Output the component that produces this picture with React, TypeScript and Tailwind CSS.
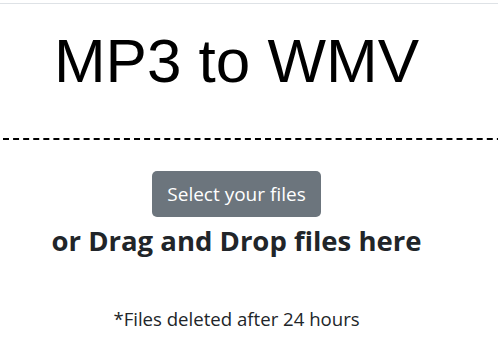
import React from "react";

export default function App() {
  return (
    <div className="w-[498px] h-[355px] bg-white overflow-hidden">
      <div className="h-[3px]" />
      <div className="h-px bg-[#dee2e6]" />
      <div className="w-[473px] mt-[26px] text-center font-['Liberation_Sans',Arial,sans-serif] text-[62px] leading-[62px] text-black whitespace-nowrap">
        MP3 to WMV
      </div>
      <div className="mt-[46px] ml-[3px] w-[520px] border-t-2 border-dashed border-black" />
      <div className="w-[473px] flex flex-col items-center font-['Open_Sans',sans-serif]">
        <button className="mt-[31px] w-[169px] h-[46px] rounded-[5px] bg-[#6c757d] text-white text-[19px] leading-[46px] flex items-center justify-center">
          Select your files
        </button>
        <div className="mt-[7px] text-[27.5px] leading-[34px] font-bold text-[#212529] whitespace-nowrap">
          or Drag and Drop files here
        </div>
        <div className="mt-[49px] text-[18.6px] leading-[24px] text-[#212529] whitespace-nowrap">
          *Files deleted after 24 hours
        </div>
      </div>
    </div>
  );
}
